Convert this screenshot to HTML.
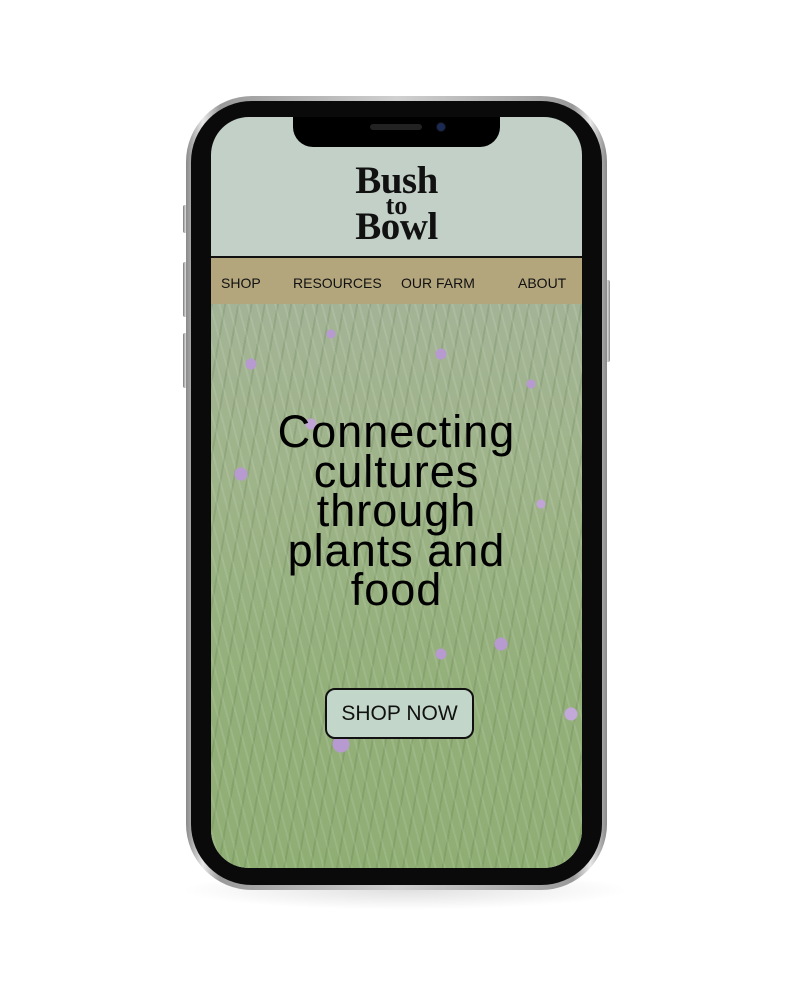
<!DOCTYPE html>
<html><head><style>
html,body{margin:0;padding:0;width:795px;height:1000px;background:#fff;overflow:hidden;font-family:"Liberation Sans",sans-serif}
.shadow{position:absolute;left:180px;top:870px;width:450px;height:40px;border-radius:50%;background:radial-gradient(ellipse at center,rgba(0,0,0,.12),rgba(0,0,0,0) 70%)}
.btn{position:absolute;background:linear-gradient(90deg,#777,#ddd,#888);border-radius:2px}
.frame{position:absolute;left:186px;top:96px;width:421px;height:794px;border-radius:66px;background:linear-gradient(90deg,#8a8a8a,#e8e8e8 4%,#9a9a9a 8%,#d0d0d0 50%,#9a9a9a 92%,#e8e8e8 96%,#8a8a8a)}
.bezel{position:absolute;left:191px;top:101px;width:411px;height:784px;border-radius:61px;background:#0a0a0a}
.screen{position:absolute;left:211px;top:117px;width:371px;height:751px;border-radius:38px;overflow:hidden;background:#c2d0c8}
.notch{position:absolute;left:293px;top:117px;width:207px;height:30px;background:#000;border-radius:0 0 20px 20px}
.grass{position:absolute;left:0;top:187px;width:371px;height:564px;
background:
radial-gradient(circle at 40px 60px,#b79ad0 0 5px,transparent 6px),
radial-gradient(circle at 120px 30px,#b79ad0 0 4px,transparent 5px),
radial-gradient(circle at 230px 50px,#b79ad0 0 5px,transparent 6px),
radial-gradient(circle at 320px 80px,#b79ad0 0 4px,transparent 5px),
radial-gradient(circle at 30px 170px,#b79ad0 0 6px,transparent 7px),
radial-gradient(circle at 290px 340px,#b79ad0 0 6px,transparent 7px),
radial-gradient(circle at 230px 350px,#b79ad0 0 5px,transparent 6px),
radial-gradient(circle at 130px 440px,#b79ad0 0 8px,transparent 9px),
radial-gradient(circle at 360px 410px,#c3a8da 0 6px,transparent 7px),
radial-gradient(circle at 100px 120px,#c0a4d6 0 5px,transparent 6px),
radial-gradient(circle at 330px 200px,#c0a4d6 0 4px,transparent 5px),
repeating-linear-gradient(75deg,rgba(255,255,255,.10) 0 2px,transparent 2px 9px),
repeating-linear-gradient(100deg,rgba(60,90,40,.15) 0 2px,transparent 2px 13px),
linear-gradient(180deg,#a3b496 0%,#9fb48a 30%,#95b07c 60%,#8fae74 100%)}
.nav{position:absolute;left:0;top:139px;width:371px;height:46px;background:#b3a57c;border-top:2px solid #111;border-bottom:2px solid #111;font-size:14px;color:#111}
.nav span{position:absolute;top:17px}
.logo{position:absolute;left:0;width:371px;text-align:center;font-family:"Liberation Serif",serif;font-weight:bold;color:#111;line-height:1}
.h{position:absolute;left:0;top:295px;width:371px;text-align:center;font-size:45px;line-height:39.5px;color:#000;letter-spacing:1px}
.shop{position:absolute;left:114px;top:571px;width:149px;height:51px;box-sizing:border-box;border:2px solid #111;border-radius:10px;background:#c2d6c9;font-size:21px;line-height:47px;text-align:center;color:#111}
</style></head><body>
<div class="shadow"></div>
<div class="btn" style="left:183px;top:205px;width:5px;height:28px"></div>
<div class="btn" style="left:183px;top:262px;width:5px;height:55px"></div>
<div class="btn" style="left:183px;top:333px;width:5px;height:55px"></div>
<div class="btn" style="left:605px;top:280px;width:5px;height:82px"></div>
<div class="frame"></div>
<div class="bezel"></div>
<div class="screen">
  <div class="logo" style="top:44px;font-size:39px;letter-spacing:-0.5px">Bush</div>
  <div class="logo" style="top:76px;font-size:26px">to</div>
  <div class="logo" style="top:90px;font-size:39px;letter-spacing:-0.5px">Bowl</div>
  <div class="nav"><span style="left:10px">SHOP</span><span style="left:82px">RESOURCES</span><span style="left:190px">OUR FARM</span><span style="left:307px">ABOUT</span></div>
  <div class="grass"></div>
  <div class="h">Connecting<br>cultures<br>through<br>plants and<br>food</div>
  <div class="shop">SHOP NOW</div>
</div>
<div class="notch"></div>
<div style="position:absolute;left:370px;top:124px;width:52px;height:6px;border-radius:3px;background:#222"></div>
<div style="position:absolute;left:437px;top:123px;width:8px;height:8px;border-radius:50%;background:#1a2a55;box-shadow:0 0 0 1px #111"></div>
</body></html>
